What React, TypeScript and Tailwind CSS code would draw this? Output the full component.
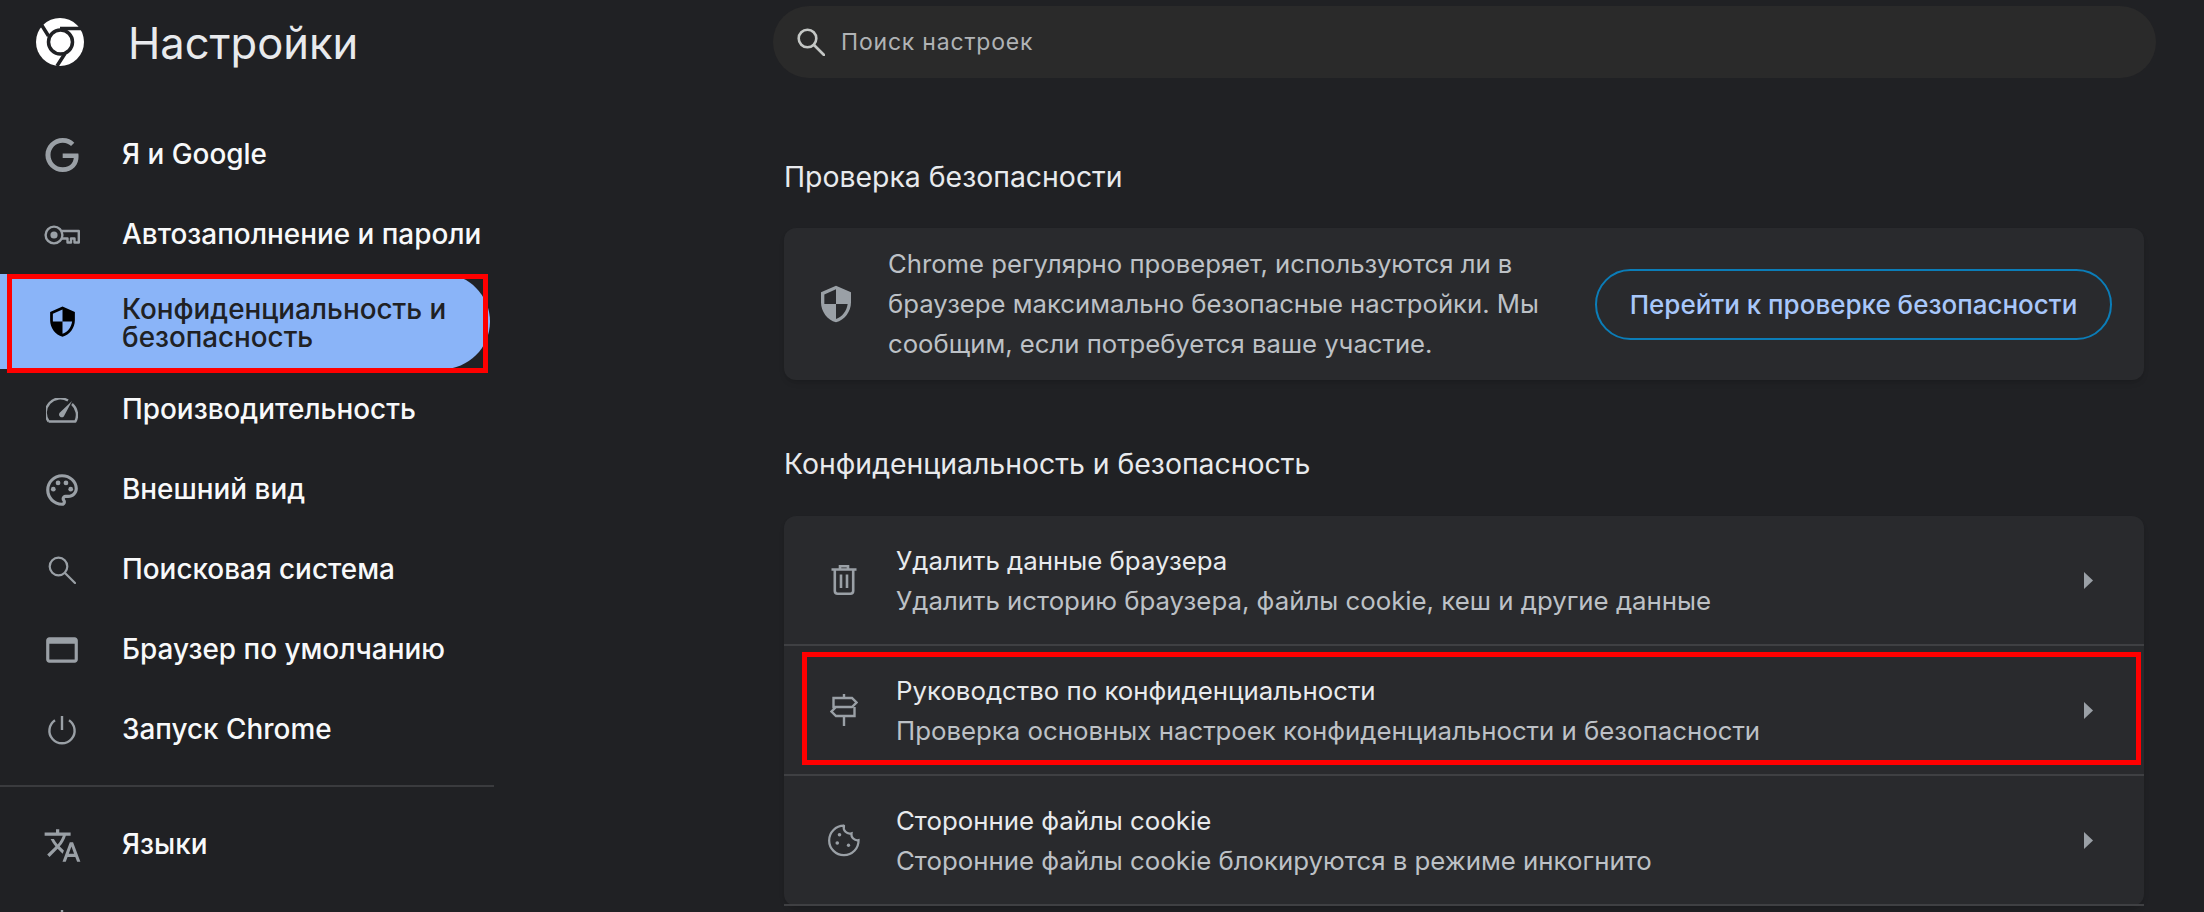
import React from 'react';

const font = { fontFamily: 'Inter, "Noto Sans", sans-serif' };

const ShieldIcon = ({ size, color }: { size: number; color: string }) => (
    <svg width={size} height={size} viewBox="0 0 24 24" fill={color}>
        <path fillRule="evenodd" d="M12 1L3 5v6c0 5.55 3.84 10.74 9 12 5.16-1.26 9-6.45 9-12V5l-9-4zm0 10.99h7c-.53 4.12-3.28 7.79-7 8.94V12H5V6.3l7-3.11v8.8z" />
    </svg>
);

const ChromeLogo = () => (
    <svg width="48" height="48" viewBox="0 0 48 48">
        <circle cx="24" cy="24" r="24" fill="#ffffff" />
        <circle cx="24.5" cy="24" r="12" fill="#ffffff" stroke="#202124" strokeWidth="3.5" />
        <path d="M24 10.5H47M12.5 18L5 6M29 35.5L21 48" stroke="#202124" strokeWidth="3.5" fill="none" />
    </svg>
);

const GoogleIcon = () => (
    <svg width="34" height="34" viewBox="0 0 24 24" fill="#9aa0a6">
        <path d="M12.48 10.92v3.28h7.84c-.24 1.84-.853 3.187-1.787 4.133-1.147 1.147-2.933 2.4-6.053 2.4-4.827 0-8.6-3.893-8.6-8.72s3.773-8.72 8.6-8.72c2.6 0 4.507 1.027 5.907 2.347l2.307-2.307C18.747 1.44 16.133 0 12.48 0 5.867 0 .307 5.387.307 12s5.56 12 12.173 12c3.573 0 6.267-1.173 8.373-3.36 2.16-2.16 2.84-5.213 2.84-7.667 0-.76-.053-1.467-.173-2.053H12.48z" />
    </svg>
);

const KeyIcon = () => (
    <svg width="36" height="20" viewBox="0 0 36 20" fill="none" stroke="#9aa0a6" strokeWidth="2.4">
        <circle cx="10" cy="10" r="8.4" />
        <circle cx="10" cy="10" r="3.6" fill="#9aa0a6" stroke="none" />
        <path d="M18 6H34.8V17.5H30.5V13.5H27V17.5H23.5V13.5H18" strokeLinejoin="round" />
    </svg>
);

const GaugeIcon = () => (
    <svg width="32" height="25" viewBox="0 0 32 25" fill="none" stroke="#9aa0a6" strokeWidth="2.4">
        <path d="M2.6 23.5A14.5 14.5 0 0 1 22 2.6M26 6A14.5 14.5 0 0 1 29.4 23.5H2.6" strokeLinejoin="round" />
        <path d="M26 3L17.8 18.4A2.8 2.8 0 0 1 13.4 15Z" fill="#9aa0a6" stroke="none" />
    </svg>
);

const PaletteIcon = () => (
    <svg width="38" height="38" viewBox="0 0 24 24" fill="#9aa0a6">
        <path d="M12 22C6.49 22 2 17.51 2 12S6.49 2 12 2s10 4.04 10 9c0 3.31-2.69 6-6 6h-1.77c-.28 0-.5.22-.5.5 0 .12.05.23.13.33.41.47.64 1.06.64 1.67 0 1.38-1.12 2.5-2.5 2.5zm0-18c-4.41 0-8 3.59-8 8s3.59 8 8 8c.28 0 .5-.22.5-.5 0-.16-.08-.28-.14-.35-.41-.46-.63-1.05-.63-1.65 0-1.38 1.12-2.5 2.5-2.5H16c2.21 0 4-1.79 4-4 0-3.86-3.59-7-8-7z" />
        <circle cx="6.5" cy="11.5" r="1.5" />
        <circle cx="9.5" cy="7.5" r="1.5" />
        <circle cx="14.5" cy="7.5" r="1.5" />
        <circle cx="17.5" cy="11.5" r="1.5" />
    </svg>
);

const SearchIcon = ({ size, color, sw }: { size: number; color: string; sw: number }) => (
    <svg width={size} height={size} viewBox="0 0 28 28" fill="none" stroke={color} strokeWidth={sw} strokeLinecap="round">
        <circle cx="10.5" cy="10.5" r="8.8" />
        <path d="M17 17L27 27" />
    </svg>
);

const BrowserIcon = () => (
    <svg width="38" height="38" viewBox="0 0 24 24" fill="#9aa0a6">
        <path d="M20 4H4c-1.1 0-2 .9-2 2v12c0 1.1.9 2 2 2h16c1.1 0 2-.9 2-2V6c0-1.1-.9-2-2-2zm0 14H4V8h16v10z" />
    </svg>
);

const PowerIcon = () => (
    <svg width="30" height="30" viewBox="0 0 30 30" fill="none" stroke="#9aa0a6" strokeWidth="2.4">
        <path d="M15 1V15" />
        <path d="M8 5.2A12.6 12.6 0 1 0 22 5.2" />
    </svg>
);

const TranslateIcon = () => (
    <svg width="39" height="39" viewBox="0 0 24 24" fill="#9aa0a6">
        <path d="M12.87 15.07l-2.54-2.51.03-.03c1.74-1.94 2.98-4.17 3.71-6.53H17V4h-7V2H8v2H1v1.99h11.17C11.5 7.92 10.44 9.75 9 11.35 8.07 10.32 7.3 9.19 6.69 8h-2c.73 1.63 1.73 3.17 2.98 4.56l-5.09 5.02L4 19l5-5 3.11 3.11.76-2.04zM18.5 10h-2L12 22h2l1.12-3h4.75L21 22h2l-4.5-12zm-2.62 7l1.62-4.33L19.12 17h-3.24z" />
    </svg>
);

const DownloadIcon = () => (
    <svg width="32" height="32" viewBox="0 0 32 32" fill="none" stroke="#9aa0a6" strokeWidth="2.4">
        <path d="M16 1V22M7 13L16 22L25 13M3 30H29" />
    </svg>
);

const TrashIcon = () => (
    <svg width="26" height="30" viewBox="0 0 26 30" fill="none" stroke="#9aa0a6" strokeWidth="2.6">
        <path d="M0.5 4.5H25.5M9 4.5V1.3H17V4.5" />
        <path d="M3.8 5V26A2.8 2.8 0 0 0 6.6 28.7H19.4A2.8 2.8 0 0 0 22.2 26V5" />
        <path d="M10 9.5V23M16 9.5V23" />
    </svg>
);

const SignpostIcon = () => (
    <svg width="28" height="32" viewBox="0 0 28 32" fill="none" stroke="#9aa0a6" strokeWidth="2.4">
        <path d="M14 0V4M14 22V32" />
        <path d="M3.5 4H22L26.5 8.5L22 13H3.5ZM24.5 13V22H6L1.5 17.5L6 13" />
    </svg>
);

const CookieIcon = () => (
    <svg width="36" height="36" viewBox="0 0 24 24" fill="none" stroke="#9aa0a6" strokeWidth="1.5" strokeLinecap="round">
        <path d="M12 2.5a9.8 9.8 0 1 0 9.7 9.6 4 4 0 0 1-4.7-4.6 4 4 0 0 1-5-5" />
        <circle cx="9" cy="8.5" r="1.2" fill="#9aa0a6" stroke="none" />
        <circle cx="7.5" cy="14" r="1.2" fill="#9aa0a6" stroke="none" />
        <circle cx="15" cy="15.5" r="1.1" fill="#9aa0a6" stroke="none" />
    </svg>
);

const navTop = [
    { label: 'Я и Google', icon: <GoogleIcon /> },
    { label: 'Автозаполнение и пароли', icon: <KeyIcon /> },
];

const navBottom = [
    { label: 'Производительность', icon: <GaugeIcon /> },
    { label: 'Внешний вид', icon: <PaletteIcon /> },
    { label: 'Поисковая система', icon: <SearchIcon size={28} color="#9aa0a6" sw={2.2} /> },
    { label: 'Браузер по умолчанию', icon: <BrowserIcon /> },
    { label: 'Запуск Chrome', icon: <PowerIcon /> },
];

const NavRow = ({ label, icon }: { label: string; icon: React.ReactNode }) => (
    <div className="flex h-[80px] items-center pl-[38px]">
        <div className="flex w-[48px] shrink-0 items-center justify-center">{icon}</div>
        <span className="ml-[36px] text-[27.9px] font-medium text-[#f8f9fa]">{label}</span>
    </div>
);

const rows = [
    { title: 'Удалить данные браузера', sub: 'Удалить историю браузера, файлы cookie, кеш и другие данные', icon: <TrashIcon /> },
    { title: 'Руководство по конфиденциальности', sub: 'Проверка основных настроек конфиденциальности и безопасности', icon: <SignpostIcon />, marked: true },
    { title: 'Сторонние файлы cookie', sub: 'Сторонние файлы cookie блокируются в режиме инкогнито', icon: <CookieIcon /> },
];

const SettingsRow = ({ title, sub, icon, marked }: { title: string; sub: string; icon: React.ReactNode; marked?: boolean }) => (
    <div className="relative flex h-[130px] items-center border-b-2 border-[#3f4043] pl-[37px] pr-[51px]">
        <div className="flex w-[46px] shrink-0 items-center justify-center">{icon}</div>
        <div className="ml-[29px] flex-1 pt-[2px]">
            <div className="text-[25.8px] leading-[40px] text-[#e8eaed]">{title}</div>
            <div className="text-[25.8px] leading-[40px] text-[#bdc1c6]">{sub}</div>
        </div>
        <svg width="9" height="17" viewBox="0 0 9 17" fill="#9aa0a6">
            <path d="M0 0L9 8.5L0 17Z" />
        </svg>
        {marked && <div className="absolute left-[18px] right-[3px] top-[6px] h-[113px] border-[5px] border-[#ff0000]" />}
    </div>
);

export default function App() {
    return (
        <div style={font} className="flex h-[912px] w-[2204px] overflow-hidden bg-[#202124]">
            {/* Sidebar */}
            <aside className="w-[494px] shrink-0">
                <div className="flex h-[115px] items-start pl-[36px] pt-[18px]">
                    <ChromeLogo />
                    <h1 className="ml-[44px] text-[43.5px] leading-[50px] text-[#e8eaed]">Настройки</h1>
                </div>
                {navTop.map((item) => (
                    <NavRow key={item.label} {...item} />
                ))}
                <div className="relative -mt-px mb-px flex h-[95px] w-[490px] items-center rounded-r-[48px] bg-[#8ab4f8] pl-[38px]">
                    <div className="flex w-[48px] shrink-0 items-center justify-center">
                        <ShieldIcon size={33} color="#000000" />
                    </div>
                    <span className="ml-[36px] pt-[2px] text-[27.8px] font-medium leading-[28px] text-[#202124]">
                        Конфиденциальность и<br />безопасность
                    </span>
                    <div className="absolute left-[7px] top-0 h-[99px] w-[481px] border-[5px] border-[#ff0000]" />
                </div>
                {navBottom.map((item) => (
                    <NavRow key={item.label} {...item} />
                ))}
                <div className="mt-[15px] h-[2px] bg-[#3a3b3e]" />
                <div className="mt-[18px]">
                    <NavRow label="Языки" icon={<TranslateIcon />} />
                    <NavRow label="Скачанные файлы" icon={<DownloadIcon />} />
                </div>
            </aside>

            {/* Main */}
            <main className="flex-1 pl-[279px] pt-[6px]">
                <div className="flex h-[72px] w-[1383px] items-center rounded-full bg-[#2a2a2a] pl-[24px]">
                    <SearchIcon size={28} color="#c4c7c5" sw={2.6} />
                    <span className="ml-[16px] text-[23px] tracking-[0.8px] text-[#b0b3b5]">Поиск настроек</span>
                </div>

                <div className="ml-[11px] w-[1360px]">
                    <h2 className="mt-[79px] text-[28.4px] leading-[40px] text-[#e8eaed]">Проверка безопасности</h2>
                    <div className="mt-[31px] flex h-[152px] items-center rounded-[12px] bg-[#292a2d] pl-[32px] pr-[32px] shadow-md">
                        <div className="flex w-[40px] shrink-0 items-center justify-center">
                            <ShieldIcon size={40} color="#9aa0a6" />
                        </div>
                        <p className="ml-[32px] w-[660px] text-[25.7px] leading-[40px] text-[#bdc1c6]">
                            Chrome регулярно проверяет, используются ли в браузере максимально безопасные настройки. Мы сообщим, если потребуется ваше участие.
                        </p>
                        <button className="ml-auto flex h-[71px] w-[517px] shrink-0 items-center justify-center rounded-full border-2 border-[#0b7db8] text-[26px] font-medium text-[#a8c7fa]">
                            Перейти к проверке безопасности
                        </button>
                    </div>

                    <h2 className="mt-[64px] text-[28.4px] leading-[40px] text-[#e8eaed]">Конфиденциальность и безопасность</h2>
                    <div className="mt-[32px] rounded-[12px] bg-[#292a2d] shadow-md">
                        {rows.map((row) => (
                            <SettingsRow key={row.title} {...row} />
                        ))}
                    </div>
                </div>
            </main>
        </div>
    );
}
